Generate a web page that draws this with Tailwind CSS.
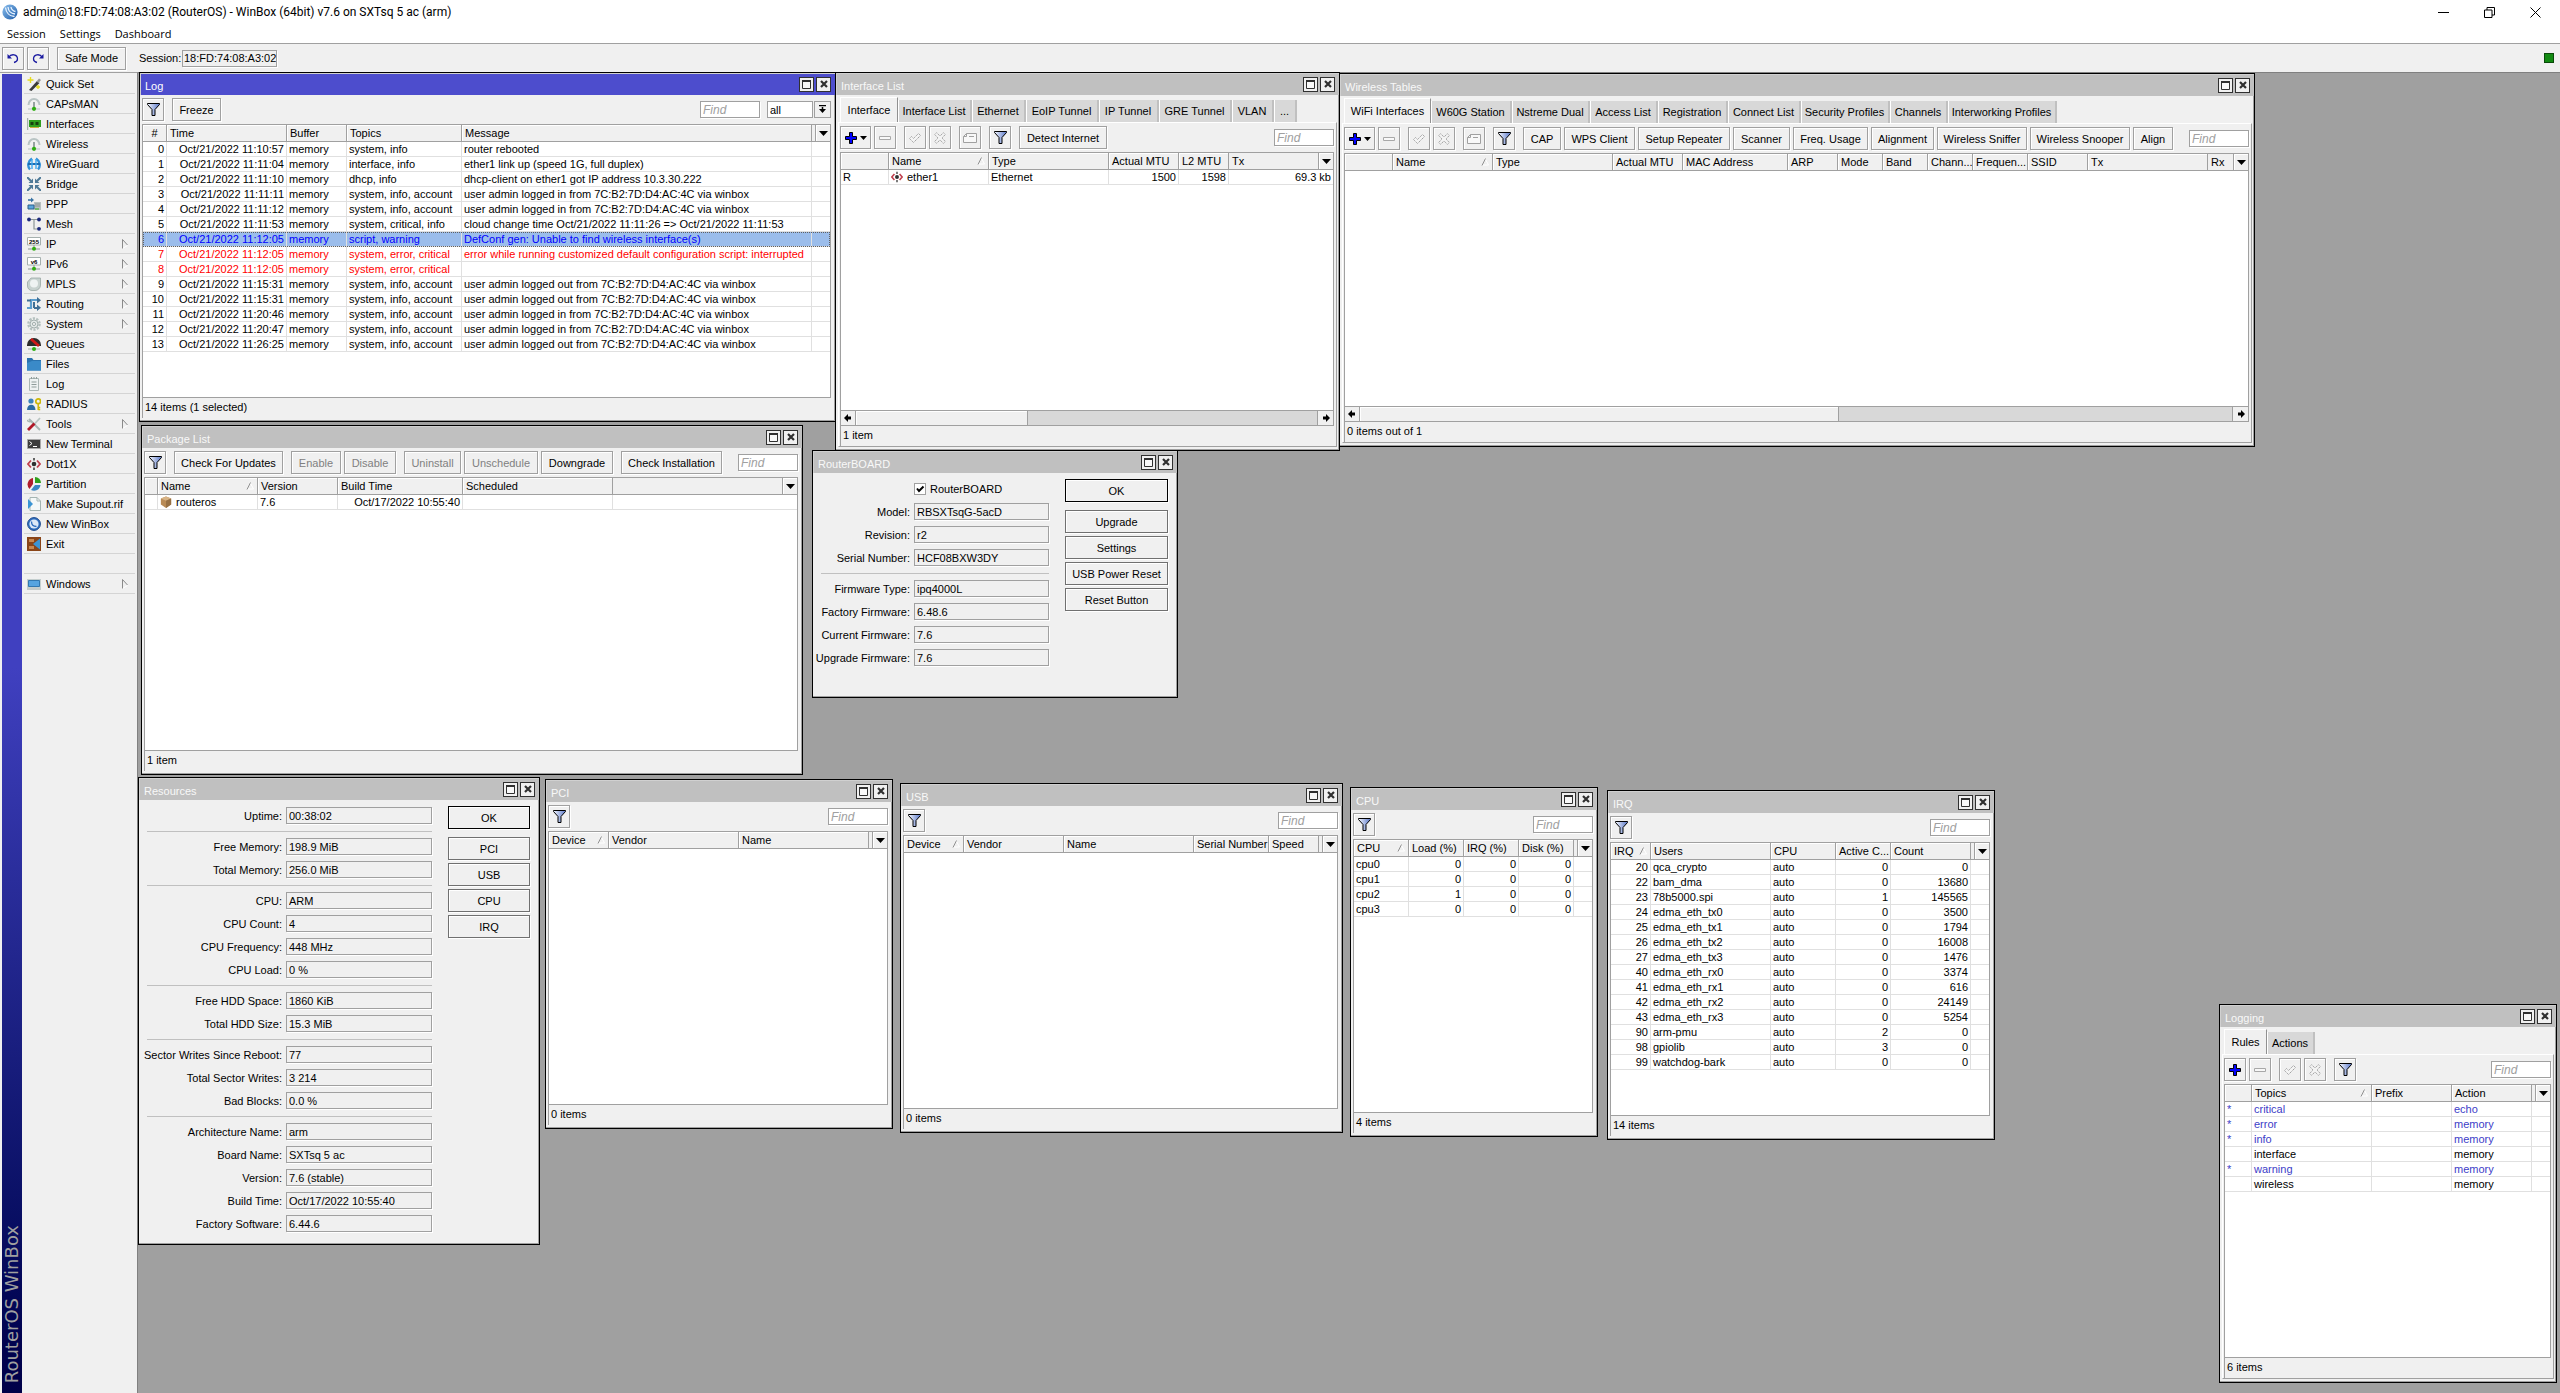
<!DOCTYPE html>
<html lang="en">
<head>
<meta charset="utf-8">
<title>admin@18:FD:74:08:A3:02 (RouterOS) - WinBox</title>
<script src="https://cdn.jsdelivr.net/npm/@tailwindcss/browser@4"></script>
</head>
<body class="flex h-screen flex-col overflow-hidden bg-[#f0f0f0] font-['Liberation_Sans',Arial,sans-serif] text-[11px] leading-[14px] text-black">

<svg class="absolute h-0 w-0" aria-hidden="true">
  <linearGradient id="ball" x1="0" y1="0" x2="1" y2="1"><stop offset="0" stop-color="#8cc0ee"/><stop offset="1" stop-color="#1d5ba8"/></linearGradient>
  <linearGradient id="fun" x1="0" y1="0" x2="1" y2="0"><stop offset="0" stop-color="#f4f7ff"/><stop offset="1" stop-color="#5a78c8"/></linearGradient>
  <symbol id="i-logo" viewBox="0 0 16 16"><circle cx="8" cy="8" r="7.6" fill="url(#ball)"/><path d="M3.5 3.5c.5 5 4 8.600 9 9M6 3c.3 3.500 3 6.500 7 7M9 3c.3 2 2 4 4.500 4.500" stroke="#e8f3ff" stroke-width="1.300" fill="none"/></symbol>
  <symbol id="i-winbox" viewBox="0 0 14 14"><circle cx="7" cy="7" r="6.400" fill="#2f6fc0" stroke="#1c4a8c"/><circle cx="7" cy="7" r="4.600" fill="#dce8f6"/><path d="M4.500 4.500c0 3 2 5 5 5" stroke="#2f6fc0" stroke-width="1.300" fill="none"/></symbol>
  <symbol id="i-quick" viewBox="0 0 14 14"><path d="M2 13L10 4l2.500 2L4.500 14z" fill="#3a3a3a"/><path d="M9.500 4.500l2.500-3 2 1.500-2.500 3z" fill="#999"/><path d="M3.500 0v6M.5 3h6M11 8v4M9 10h4" stroke="#e6dc1e" stroke-width="1.400"/></symbol>
  <symbol id="i-wifi" viewBox="0 0 14 14"><path d="M1.500 8A5.500 6 0 0 1 12.500 8" fill="none" stroke="#b9c4c4" stroke-width="2"/><path d="M7 5v6" stroke="#70807e" stroke-width="1.400"/><path d="M1 12h12" stroke="#b9c4c4"/><circle cx="7" cy="11.800" r="2.100" fill="#2fae12"/></symbol>
  <symbol id="i-card" viewBox="0 0 14 14"><path d="M.5 1v12" stroke="#a5b0ae" stroke-width="1.500"/><path d="M2 3h12v7H2z" fill="#2f9e1f"/><path d="M3.500 5h3v3h-3zM8.500 5h3v3h-3z" fill="#17400f"/><path d="M3 10.500h9" stroke="#c7b13c"/></symbol>
  <symbol id="i-wg" viewBox="0 0 14 14"><path d="M5 1.500C1 4 0 9 3 12.500M9 1.500c4 2.500 5 7.500 2 11" stroke="#2f8fd8" stroke-width="2.400" fill="none"/><path d="M1 7h12" stroke="#1c6bb0" stroke-width="2"/><path d="M5 2v10M9 2v10" stroke="#3fa9ee" stroke-width="1.400"/></symbol>
  <symbol id="i-bridge" viewBox="0 0 14 14"><path d="M0 0l4 4M14 0l-4 4M0 14l4-4M14 14l-4-4" stroke="#4d7896" stroke-width="2"/><path d="M6 1.500V6H1.500zM8 1.500V6h4.500zM6 12.500V8H1.500zM8 12.500V8h4.500z" fill="#4d7896"/></symbol>
  <symbol id="i-ppp" viewBox="0 0 14 14"><path d="M1 3h4" stroke="#3a74a4" stroke-width="1.600"/><path d="M4 .5L7 3 4 5.500z" fill="#3a74a4"/><path d="M7 5h7v8H7z" fill="#b8c0c0"/><path d="M8 7h5M8 9h5" stroke="#8b9494"/><path d="M8 12h4" stroke="#2fae12"/><path d="M1 8h6v4H1z" fill="#5aa6dc" stroke="#2d5f8a"/></symbol>
  <symbol id="i-mesh" viewBox="0 0 14 14"><path d="M2 2.500h10M7 2.500V12h5" stroke="#8c9796" stroke-width="1.200" fill="none"/><circle cx="2" cy="2.500" r="1.900" fill="#1c2a7c"/><circle cx="12" cy="2.500" r="1.900" fill="#1c2a7c"/><circle cx="12" cy="11.800" r="1.900" fill="#1c2a7c"/></symbol>
  <symbol id="i-ip" viewBox="0 0 14 14"><path d="M.5 .5h13v7.500H.5z" fill="#fff" stroke="#a5b0ae"/><path d="M7 8v3M1 12h12" stroke="#8c9796"/><circle cx="7" cy="11.800" r="2" fill="#2fae12"/></symbol>
  <symbol id="i-mpls" viewBox="0 0 14 14"><path d="M4 1h9.500v7A5.500 5.500 0 0 1 8 13.500H5A4.500 4.500 0 0 1 .5 9V5z" fill="#c7d2cf" stroke="#9aa8a5" stroke-width=".8"/><circle cx="7" cy="6.500" r="4" fill="#eef3f2"/></symbol>
  <symbol id="i-routing" viewBox="0 0 14 14"><path d="M0 11h4V3h6" stroke="#5b9dce" stroke-width="2.200" fill="none"/><path d="M0 3.500h4M7 11V6h1M7 11h3" stroke="#3f6f95" stroke-width="2" fill="none"/><path d="M10 0l4 3.200-4 3.200zM10 7.600l4 3.200-4 3.200z" fill="#3f6f95"/></symbol>
  <symbol id="i-gear" viewBox="0 0 14 14"><circle cx="7" cy="7" r="5.600" fill="none" stroke="#b4c0be" stroke-width="2.400" stroke-dasharray="2.200 1.300"/><circle cx="7" cy="7" r="4" fill="#e3e9e8" stroke="#a3b0ae"/><circle cx="7" cy="7" r="1.600" fill="#f0f0f0" stroke="#a3b0ae"/></symbol>
  <symbol id="i-queue" viewBox="0 0 14 14"><path d="M0 8a7 7 0 0 1 14 0v1H0z" fill="#2c2c2c"/><path d="M4 2l8 7" stroke="#d01818" stroke-width="2.800"/><path d="M1 12h12" stroke="#a5b0ae"/><circle cx="7" cy="11.900" r="2" fill="#2fae12"/></symbol>
  <symbol id="i-files" viewBox="0 0 14 14"><path d="M0 1h5l1.500 2H14v10.500H0z" fill="#2a72ae"/><path d="M0 6l5-2h9v9.500H0z" fill="#3a8ac8"/></symbol>
  <symbol id="i-log" viewBox="0 0 14 14"><path d="M2.500 1.500h9v12h-9z" fill="#eef2f2" stroke="#aab6b4"/><path d="M4.500 5h5M4.500 7.500h5M4.500 10h5M4.500 0v2M7 0v2M9.500 0v2" stroke="#8f9c9a"/></symbol>
  <symbol id="i-radius" viewBox="0 0 14 14"><circle cx="4" cy="4" r="2.600" fill="#3a84bc"/><path d="M0 13c0-7 8.500-7 8.500 0z" fill="#2a6ca4"/><circle cx="11.200" cy="4.300" r="2.400" fill="none" stroke="#ccb80a" stroke-width="1.700"/><path d="M11.200 6.500V13M11.200 10.500h2M11.200 12.500h2" stroke="#ccb80a" stroke-width="1.500"/></symbol>
  <symbol id="i-tools" viewBox="0 0 14 14"><path d="M2 2l11 11" stroke="#a9b6b4" stroke-width="2"/><path d="M0 3a3 3 0 0 0 4.500 1" stroke="#a9b6b4" stroke-width="1.600" fill="none"/><path d="M13 1L7.500 7" stroke="#b8c4c2" stroke-width="1.800"/><path d="M7.500 6.500L1 13" stroke="#b01828" stroke-width="2.800"/></symbol>
  <symbol id="i-term" viewBox="0 0 14 14"><path d="M.5 2.500h13v9H.5z" fill="#3c3c3c" stroke="#a8a8a8"/><path d="M2.500 4.500l2.500 2-2.500 2M6 9.500h4" stroke="#fff" fill="none"/></symbol>
  <symbol id="i-dot" viewBox="0 0 14 14"><path d="M4 3.500L1 7l3 3.500M10 3.500L13 7l-3 3.500" stroke="#c0404e" stroke-width="1.800" fill="none"/><circle cx="7" cy="7" r="2.300" fill="#303030"/><path d="M7 1v2.500M7 10.500V13" stroke="#404040" stroke-width="1.600"/></symbol>
  <symbol id="i-part" viewBox="0 0 14 14"><path d="M6 1v6l-3.500 5A6.500 6.500 0 0 1 6 1z" fill="#b01c2c"/><path d="M8 0a6 6 0 0 1 6 6H8z" fill="#2ea01c"/><path d="M13.500 8a6.500 6.500 0 0 1-9.500 5l4-5z" fill="#3a86c4"/></symbol>
  <symbol id="i-supout" viewBox="0 0 14 14"><path d="M3 .5h7l3.500 3.500v9.500H3z" fill="#f4f8f8" stroke="#a5b4b2"/><path d="M10 .5V4h3.500" fill="none" stroke="#a5b4b2"/><path d="M1 2l5 5-5 5z" fill="#3a94d4"/></symbol>
  <symbol id="i-exit" viewBox="0 0 14 14"><path d="M0 0h14v14H0z" fill="#8a4518"/><path d="M2 2h5v3H2zM2 9h5v3H2z" fill="#c88850"/><path d="M13 1.500v11L6 7z" fill="#3a94d4"/></symbol>
  <symbol id="i-win" viewBox="0 0 14 14"><path d="M0 2h14v9H0z" fill="#c4cece"/><path d="M1.500 3.500h11v6h-11z" fill="#56a4e0" stroke="#3278b0"/><path d="M0 12h14" stroke="#98a4a2"/></symbol>
  <symbol id="i-box" viewBox="0 0 14 14"><path d="M1 3l6-2.500L13 3v7l-6 4-6-4z" fill="#b98b56"/><path d="M1 3l6 2.500L13 3 7 .5z" fill="#d8b384"/><path d="M7 5.500V14l6-4V3z" fill="#977044"/></symbol>
  <symbol id="i-plus" viewBox="0 0 12 12"><path d="M4.500 .5h3v4h4v3h-4v4h-3v-4h-4v-3h4z" fill="#0000ff" stroke="#000"/></symbol>
  <symbol id="i-minus" viewBox="0 0 12 12"><path d="M.5 4.500h11v3H.5z" fill="#f8f8f8" stroke="#a8a8a8"/></symbol>
  <symbol id="i-check" viewBox="0 0 12 12"><path d="M.5 6.500L2.500 4.500l2 2L9.500 1.500l2 2-7 7z" fill="#f4f4f4" stroke="#a0a0a0" stroke-dasharray="1.500 .7"/></symbol>
  <symbol id="i-cross" viewBox="0 0 12 12"><path d="M.7 2.500L2.500 .7 6 4 9.500 .7l1.800 1.800L8 6l3.300 3.500-1.800 1.800L6 8l-3.500 3.300L.7 9.500 4 6z" fill="#f4f4f4" stroke="#a0a0a0" stroke-dasharray="1.500 .7"/></symbol>
  <symbol id="i-note" viewBox="0 0 14 12"><path d="M.5 4.500l3-3h10v9H.5z" fill="#f8f8f8" stroke="#a0a0a0"/><path d="M6 4.500h5M.5 4.500h3v-3" stroke="#a0a0a0" fill="none"/></symbol>
  <symbol id="i-filter" viewBox="0 0 13 13"><path d="M.5 .5h12v1L8 6.500v6H5v-6L.5 1.500z" fill="url(#fun)" stroke="#000"/></symbol>
  <symbol id="i-tri" viewBox="0 0 9 5"><path d="M0 0h9L4.500 5z" fill="#000"/></symbol>
  <symbol id="i-sort" viewBox="0 0 8 8"><path d="M4 .5L7.500 7H1" stroke="#fff" fill="none"/><path d="M4.500 .5L1 7.500" stroke="#909090" fill="none"/></symbol>
  <symbol id="i-sub" viewBox="0 0 6 10"><path d="M.5 10V.5L5.500 6" stroke="#8a8a8a" fill="none"/><path d="M5.500 6.500l-5 3" stroke="#fff" fill="none"/></symbol>
  <symbol id="i-undo" viewBox="0 0 12 12"><path d="M1.500 5.500c3-4.500 9-3 9 1.500 0 2-1.500 3-3.500 3.500" stroke="#1a1aa0" stroke-width="1.300" fill="none"/><path d="M.5 2v4.500H5z" fill="#1a1aa0"/></symbol>
  <symbol id="i-max" viewBox="0 0 9 9"><path d="M.5 .5h8v8h-8z" fill="#f8f8f8" stroke="#303030"/><path d="M0 1h9" stroke="#303030" stroke-width="2"/></symbol>
  <symbol id="i-x" viewBox="0 0 8 8"><path d="M1 1l6 6M7 1L1 7" stroke="#303030" stroke-width="2.200"/></symbol>
  <symbol id="i-arr" viewBox="0 0 8 8"><path d="M0 4l4-4v2.500h3v3H4V8z" fill="#000"/></symbol>
  <symbol id="i-tick" viewBox="0 0 12 12"><path d="M3 5.500l2 2.500 4.500-4.500" fill="none" stroke="#000" stroke-width="2"/></symbol>
</svg>

<header class="border-b border-[#a0a0a0] bg-white">
  <div class="flex h-[24px] items-center pl-[2px] font-['Roboto',sans-serif] text-[12px] leading-4">
    <svg class="h-4 w-4"><use href="#i-logo"/></svg>
    <h1 class="ml-[5px] flex-1">admin@18:FD:74:08:A3:02 (RouterOS) - WinBox (64bit) v7.6 on SXTsq 5 ac (arm)</h1>
    <button aria-label="Minimize" class="flex h-[22px] w-[46px] items-center justify-center"><svg class="h-[11px] w-[11px]" viewBox="0 0 11 11"><path d="M0 5.500h11" stroke="#000"/></svg></button>
    <button aria-label="Restore" class="flex h-[22px] w-[46px] items-center justify-center"><svg class="h-[11px] w-[11px]" viewBox="0 0 11 11"><path d="M.5 3h7.500v7.500H.5zM3 3V.5h7.500V8H8" fill="none" stroke="#000"/></svg></button>
    <button aria-label="Close" class="mr-[2px] flex h-[22px] w-[46px] items-center justify-center"><svg class="h-[11px] w-[11px]" viewBox="0 0 11 11"><path d="M.5 .5l10 10M10.500 .5l-10 10" stroke="#000"/></svg></button>
  </div>
  <nav class="flex h-[19px] items-center gap-[14px] pl-[7px] font-['Open_Sans','Noto_Sans',sans-serif] text-[11px] leading-4">
    <a href="#">Session</a><a href="#">Settings</a><a href="#">Dashboard</a>
  </nav>
</header>

<div class="flex h-[28px] items-center pr-[6px] pl-[2px]">
  <button aria-label="Undo" class="flex h-[23px] w-[22px] items-center justify-center border border-[#a0a0a0] shadow-[1px_1px_0_#fff,inset_1px_1px_0_#fff]"><svg class="h-3 w-3"><use href="#i-undo"/></svg></button>
  <button aria-label="Redo" class="ml-[3px] flex h-[23px] w-[22px] items-center justify-center border border-[#a0a0a0] shadow-[1px_1px_0_#fff,inset_1px_1px_0_#fff]"><svg class="h-3 w-3 -scale-x-100"><use href="#i-undo"/></svg></button>
  <button class="ml-2 h-[23px] w-[69px] border border-[#a0a0a0] shadow-[1px_1px_0_#fff,inset_1px_1px_0_#fff]">Safe Mode</button>
  <label for="session" class="ml-[13px] w-[43px]">Session:</label>
  <input id="session" readonly value="18:FD:74:08:A3:02" class="h-[17px] w-[95px] border border-[#a0a0a0] pl-px shadow-[1px_1px_0_#fff]">
  <span class="ml-auto h-[10px] w-[10px] border border-[#0a4a0a] bg-[#128a12]"></span>
</div>

<div class="flex min-h-0 flex-1">
  <aside class="flex w-[138px] shrink-0 border-t border-r border-t-[#a0a0a0] border-r-[#808080] pt-px pl-[2px]">
    <div class="flex w-5 items-end justify-center bg-linear-to-b from-[#4040c0] from-45% to-[#000048] pb-[10px]">
      <span class="rotate-180 font-['DejaVu_Sans',sans-serif] text-[18px] leading-5 whitespace-nowrap text-[#a0a0a0] [writing-mode:vertical-rl]">RouterOS WinBox</span>
    </div>
    <nav id="menu" class="ml-[2px] w-[111px]"></nav>
  </aside>
  <main id="desk" class="relative flex-1 overflow-hidden bg-[#a0a0a0] shadow-[inset_0_1px_0_#808080]"></main>
</div>

<script>
const icon = (id, cls = 'h-[14px] w-[14px]') => `<svg class="shrink-0 ${cls}" aria-hidden="true"><use href="#i-${id}"/></svg>`;

/* ---- side menu: [icon, label, has submenu] ---- */
const menu = [['quick','Quick Set'],['wifi','CAPsMAN'],['card','Interfaces'],['wifi','Wireless'],['wg','WireGuard'],['bridge','Bridge'],['ppp','PPP'],['mesh','Mesh'],['ip','IP',1,'255'],['ip','IPv6',1,'v6'],['mpls','MPLS',1],['routing','Routing',1],['gear','System',1],['queue','Queues'],['files','Files'],['log','Log'],['radius','RADIUS'],['tools','Tools',1],['term','New Terminal'],['dot','Dot1X'],['part','Partition'],['supout','Make Supout.rif'],['winbox','New WinBox'],['exit','Exit'],null,['win','Windows',1]];
document.getElementById('menu').innerHTML = menu.map(m => {
  if (!m) return '<div class="h-5 border-b border-[#d4d4d4]"></div>';
  const pic = m[3]
    ? `<svg class="h-[14px] w-[14px] shrink-0" viewBox="0 0 14 14" aria-hidden="true"><use href="#i-ip" width="14" height="14"/><text x="7" y="6.500" text-anchor="middle" font-size="6" font-weight="bold">${m[3]}</text></svg>`
    : icon(m[0]);
  return `<a href="#" class="flex h-5 items-center gap-[5px] border-b border-[#d4d4d4] pr-[7px] pl-[3px] whitespace-nowrap">${pic}<span class="flex-1">${m[1]}</span>${m[2] ? icon('sub','h-[10px] w-[6px]') : ''}</a>`;
}).join('');

/* ---- controls ---- */
const btn = (w, label, cls = 'border-[#a0a0a0]') => `<button class="h-[23px] shrink-0 border whitespace-nowrap shadow-[1px_1px_0_#fff,inset_1px_1px_0_#fff] ${cls}" style="width:${w}px">${label}</button>`;
const tb = (w, label, cls) => btn(w, label, 'border-[#a0a0a0] ' + cls);
const ib = (id, name, size = 'h-3 w-3', cls = '') => `<button aria-label="${name}" class="flex h-[23px] w-[22px] shrink-0 items-center justify-center border border-[#a0a0a0] shadow-[1px_1px_0_#fff,inset_1px_1px_0_#fff] ${cls}">${icon(id, size)}</button>`;
const find = (cls = 'ml-auto') => `<input type="search" aria-label="Find" placeholder="Find" class="h-[17px] w-[60px] border border-[#a0a0a0] bg-white pl-[2px] text-[12px] shadow-[1px_1px_0_#fff] placeholder:text-[#a0a0a0] placeholder:italic ${cls}">`;
const filter = (cls = '') => ib('filter', 'Filter', 'h-[13px] w-[13px]', cls);
const addMenu = `<button aria-label="Add" class="flex h-[23px] w-[31px] shrink-0 items-center justify-center gap-[3px] border border-[#a0a0a0] shadow-[1px_1px_0_#fff,inset_1px_1px_0_#fff]">${icon('plus','h-3 w-3')}${icon('tri','h-1 w-[7px]')}</button>`;
const edit = (add, note) => add + ib('minus','Remove','h-3 w-3','ml-[3px]') + ib('check','Enable','h-3 w-3','ml-2') + ib('cross','Disable','h-3 w-3','ml-[3px]') + (note ? ib('note','Comment','h-3 w-[14px]','ml-2') : '') + filter('ml-2');

/* cols: [width, title, align, sorted]; the last column takes what is left and holds the column menu */
function grid(t) {
  const head = t.cols.map((c, i) => {
    if (i === t.cols.length - 1) return `<th class="h-[17px] border-b border-[#a0a0a0] p-0 text-left font-normal"><div class="flex h-4 items-center justify-between"><span class="pl-[3px]">${c[1] || ''}</span><button aria-label="Columns" class="flex h-4 w-[15px] items-center justify-center border-l border-[#a0a0a0] shadow-[inset_1px_1px_0_#fff]">${icon('tri','h-[5px] w-[9px]')}</button></div></th>`;
    return `<th class="h-[17px] overflow-hidden border-r border-b border-[#a0a0a0] px-[3px] py-0 font-normal shadow-[inset_1px_1px_0_#fff] ${c[2] === 'c' ? 'text-center' : 'text-left'}"><div class="flex items-center ${c[2] === 'c' ? 'justify-center' : 'justify-between'}"><span class="whitespace-nowrap">${c[1]}</span>${c[3] ? icon('sort','h-2 w-2') : ''}</div></th>`;
  }).join('');
  const body = (t.rows || []).map(r => {
    const tone = { sel: 'bg-[#9bbdeb] text-[#0000ff] outline outline-dotted -outline-offset-1 outline-[#606060]', red: 'text-[#ff0000]', blue: 'text-[#4040c8]' }[r.tone] || '';
    return `<tr class="${tone}">` + t.cols.map((c, i) => `<td class="h-[15px] overflow-hidden border-b border-[#e0e0e0] px-[2px] py-0 whitespace-nowrap ${i < t.cols.length - 1 ? 'border-r' : ''} ${c[2] === 'r' || c[2] === 'c' ? 'text-right' : 'text-left'}">${r.c[i] ?? ''}</td>`).join('') + '</tr>';
  }).join('');
  const bar = t.thumb ? `<div class="flex h-[15px] border-r border-b border-[#a0a0a0] bg-[#d8d8d8]"><button aria-label="Scroll left" class="flex w-[15px] items-center justify-center border-r border-[#a0a0a0] bg-[#f0f0f0]">${icon('arr','h-2 w-2')}</button><div class="border-r border-[#a0a0a0] bg-[#f0f0f0] shadow-[inset_1px_1px_0_#fff]" style="width:${t.thumb}px"></div><button aria-label="Scroll right" class="ml-auto flex w-4 items-center justify-center border-l border-[#a0a0a0] bg-[#f0f0f0]">${icon('arr','h-2 w-2 rotate-180')}</button></div>` : '';
  return `<div class="flex min-h-0 flex-1 flex-col border-l border-[#a0a0a0]"><div class="min-h-0 flex-1 overflow-hidden border-t border-r border-b border-[#a0a0a0] bg-white"><table class="w-full table-fixed border-separate border-spacing-0"><colgroup>${t.cols.map(c => c[0] ? `<col style="width:${c[0]}px">` : '<col>').join('')}</colgroup><thead class="bg-[#f0f0f0]"><tr>${head}</tr></thead><tbody>${body}</tbody></table></div>${bar}<div class="flex h-5 items-center pb-[2px] pl-[2px]">${t.status}</div></div>`;
}
const tools = (html) => `<div class="flex h-[29px] shrink-0 items-center">${html}</div>`;
const plain = (bar, t) => `<div class="flex min-h-0 flex-1 flex-col pr-1 pb-[3px] pl-[2px]">${tools(bar)}${grid(t)}</div>`;
const tabbed = (tabs, bar, t) => `<div class="flex min-h-0 flex-1 flex-col px-[2px] pt-[2px] pb-[3px]"><div role="tablist" class="flex h-[25px] shrink-0 items-end pl-[2px]">${tabs.map(([w, n], i) => i
  ? `<button role="tab" class="h-[22px] shrink-0 border-r-2 border-[#c0c0c0] bg-[#d8d8d8] shadow-[inset_1px_0_0_#fff]" style="width:${w}px">${n}</button>`
  : `<button role="tab" aria-selected="true" class="h-[25px] shrink-0 border-t border-r border-l border-t-white border-r-[#909090] border-l-white" style="width:${w}px">${n}</button>`).join('')}</div><div class="flex min-h-0 flex-1 flex-col border border-t-white border-r-[#a0a0a0] border-b-[#a0a0a0] border-l-white pr-[2px] pl-px">${tools(bar)}${grid(t)}</div></div>`;

/* rows: [label, value] or null for a divider */
const form = (id, left, width, rows, fieldW, btnW, btns) => `<div class="flex pt-1 pl-2"><div class="shrink-0" style="width:${width}px">${left}${rows.map((r, i) => r
  ? `<div class="flex h-[23px] items-center justify-end gap-1"><label for="${id}${i}" class="whitespace-nowrap">${r[0]}:</label><input id="${id}${i}" readonly value="${r[1]}" class="h-[17px] shrink-0 border border-[#a0a0a0] pl-[2px] shadow-[1px_1px_0_#fff]" style="width:${fieldW}px"></div>`
  : '<hr class="mt-1 mb-[3px] border-t border-[#c0c0c0]">').join('')}</div><div class="ml-4 flex flex-col gap-[3px] pt-[2px]">${btns.map((b, i) => btn(btnW, b, i ? 'border-[#707070]' : 'mb-[5px] border-black')).join('')}</div></div>`;

const win = (title, place, body, active) => `<section aria-label="${title}" class="absolute flex flex-col border border-black bg-[#f0f0f0] shadow-[inset_-1px_-1px_0_#a0a0a0] ${place}"><div class="flex h-[22px] shrink-0 items-center gap-[2px] pr-1 pl-[5px] shadow-[inset_1px_1px_0_#d0d0d0] ${active ? 'bg-[#4d4dcd] text-white' : 'bg-[#c0c0c0] text-[#f8f8f8]'}"><h2 class="flex-1 pt-[3px]">${title}</h2>${['max','x'].map(k => `<button aria-label="${k === 'x' ? 'Close' : 'Maximize'}" class="flex h-[15px] w-[15px] items-center justify-center border border-[#303030] bg-[#f0f0f0]">${icon(k, k === 'x' ? 'h-2 w-2' : 'h-[9px] w-[9px]')}</button>`).join('')}</div>${body}</section>`;

/* ---- data ---- */
const A = 'system, info, account', MAC = '7C:B2:7D:D4:AC:4C';
const inn = `user admin logged in from ${MAC} via winbox`, out = `user admin logged out from ${MAC} via winbox`;
const log = [['11:10:57','system, info','router rebooted'],['11:11:04','interface, info','ether1 link up (speed 1G, full duplex)'],['11:11:10','dhcp, info','dhcp-client on ether1 got IP address 10.3.30.222'],['11:11:11',A,inn],['11:11:12',A,inn],['11:11:53','system, critical, info','cloud change time Oct/21/2022 11:11:26 =&gt; Oct/21/2022 11:11:53'],['11:12:05','script, warning','DefConf gen: Unable to find wireless interface(s)','sel'],['11:12:05','system, error, critical','error while running customized default configuration script: interrupted','red'],['11:12:05','system, error, critical','','red'],['11:15:31',A,out],['11:15:31',A,out],['11:20:46',A,inn],['11:20:47',A,inn],['11:26:25',A,out]]
  .map((r, i) => ({ c: [i, 'Oct/21/2022 ' + r[0], 'memory', r[1], r[2]], tone: r[3] }));
const irq = [[20,'qca_crypto',0,0],[22,'bam_dma',0,13680],[23,'78b5000.spi',1,145565],[24,'edma_eth_tx0',0,3500],[25,'edma_eth_tx1',0,1794],[26,'edma_eth_tx2',0,16008],[27,'edma_eth_tx3',0,1476],[40,'edma_eth_rx0',0,3374],[41,'edma_eth_rx1',0,616],[42,'edma_eth_rx2',0,24149],[43,'edma_eth_rx3',0,5254],[90,'arm-pmu',2,0],[98,'gpiolib',3,0],[99,'watchdog-bark',0,0]]
  .map(r => ({ c: [r[0], r[1], 'auto', r[2], r[3]] }));
const named = (id, n) => `<span class="flex items-center gap-1">${icon(id,'h-3 w-3')}${n}</span>`;

document.getElementById('desk').innerHTML = [
  win('Log', 'left-px top-0 h-[350px] w-[697px]', plain(
    filter() + tb(49,'Freeze','ml-2') + find() + `<select aria-label="Buffer" class="ml-[7px] h-[17px] w-[46px] appearance-none border border-[#a0a0a0] bg-white pl-[2px]"><option>all</option></select><button aria-label="Choose buffer" class="ml-px flex h-[17px] w-[17px] items-center justify-center border border-[#a0a0a0]"><svg class="h-[9px] w-[7px]" viewBox="0 0 7 9"><path d="M0 .5h7M3.500 2v3" stroke="#000" stroke-width="1.500"/><path d="M0 4h7L3.500 8z"/></svg></button>`,
    { cols: [[24,'#','c'],[120,'Time','r'],[60,'Buffer'],[115,'Topics'],[350,'Message'],[0]], rows: log, status: '14 items (1 selected)' }), true),
  win('Interface List', 'left-[697px] top-0 h-[379px] w-[505px]', tabbed(
    [[58,'Interface'],[74,'Interface List'],[54,'Ethernet'],[73,'EoIP Tunnel'],[60,'IP Tunnel'],[73,'GRE Tunnel'],[42,'VLAN'],[23,'...']],
    edit(addMenu, true) + tb(88,'Detect Internet','ml-2') + find(),
    { cols: [[48,''],[100,'Name','',1],[120,'Type'],[70,'Actual MTU','r'],[50,'L2 MTU','r'],[0,'Tx','r']], rows: [{ c: ['R', named('dot','ether1'), 'Ethernet', '1500', '1598', '69.3 kb'] }], thumb: 172, status: '1 item' })),
  win('Wireless Tables', 'left-[1201px] top-px h-[374px] w-[916px]', tabbed(
    [[87,'WiFi Interfaces'],[81,'W60G Station'],[78,'Nstreme Dual'],[68,'Access List'],[70,'Registration'],[73,'Connect List'],[89,'Security Profiles'],[58,'Channels'],[109,'Interworking Profiles']],
    edit(addMenu, true) + tb(38,'CAP','ml-2') + [[71,'WPS Client'],[92,'Setup Repeater'],[57,'Scanner'],[75,'Freq. Usage'],[63,'Alignment'],[90,'Wireless Sniffer'],[100,'Wireless Snooper'],[40,'Align']].map(b => tb(b[0], b[1], 'ml-[3px]')).join('') + find(),
    { cols: [[48,''],[100,'Name','',1],[120,'Type'],[70,'Actual MTU'],[105,'MAC Address'],[50,'ARP'],[45,'Mode'],[45,'Band'],[45,'Chann...'],[55,'Frequen...'],[60,'SSID'],[120,'Tx'],[0,'Rx']], thumb: 479, status: '0 items out of 1' })),
  win('Package List', 'left-[3px] top-[353px] h-[350px] w-[662px]', plain(
    filter() + tb(109,'Check For Updates','ml-2') + tb(50,'Enable','ml-2 text-[#808080]') + tb(52,'Disable','ml-[3px] text-[#808080]') + tb(57,'Uninstall','ml-2 text-[#808080]') + tb(74,'Unschedule','ml-[3px] text-[#808080]') + tb(72,'Downgrade','ml-[3px]') + tb(101,'Check Installation','ml-2') + find(),
    { cols: [[13,''],[100,'Name','',1],[80,'Version'],[125,'Build Time','r'],[150,'Scheduled'],[0]], rows: [{ c: ['', named('box','routeros'), '7.6', 'Oct/17/2022 10:55:40'] }], status: '1 item' })),
  win('RouterBOARD', 'left-[674px] top-[378px] h-[248px] w-[366px]', form('rb',
    `<div class="flex h-[23px] items-center gap-1 pl-[93px]"><span class="grid"><input id="rbon" type="checkbox" checked class="peer col-start-1 row-start-1 h-3 w-3 appearance-none border border-[#a0a0a0] bg-white"><span class="pointer-events-none invisible col-start-1 row-start-1 peer-checked:visible">${icon('tick','h-3 w-3')}</span></span><label for="rbon">RouterBOARD</label></div>`,
    228, [['Model','RBSXTsqG-5acD'],['Revision','r2'],['Serial Number','HCF08BXW3DY'],null,['Firmware Type','ipq4000L'],['Factory Firmware','6.48.6'],['Current Firmware','7.6'],['Upgrade Firmware','7.6']], 135, 103, ['OK','Upgrade','Settings','USB Power Reset','Reset Button'])),
  win('Resources', 'left-0 top-[705px] h-[468px] w-[402px]', form('rs', '',
    285, [['Uptime','00:38:02'],null,['Free Memory','198.9 MiB'],['Total Memory','256.0 MiB'],null,['CPU','ARM'],['CPU Count','4'],['CPU Frequency','448 MHz'],['CPU Load','0 %'],null,['Free HDD Space','1860 KiB'],['Total HDD Size','15.3 MiB'],null,['Sector Writes Since Reboot','77'],['Total Sector Writes','3 214'],['Bad Blocks','0.0 %'],null,['Architecture Name','arm'],['Board Name','SXTsq 5 ac'],['Version','7.6 (stable)'],['Build Time','Oct/17/2022 10:55:40'],['Factory Software','6.44.6']], 146, 82, ['OK','PCI','USB','CPU','IRQ'])),
  win('PCI', 'left-[407px] top-[707px] h-[350px] w-[348px]', plain(filter() + find(),
    { cols: [[60,'Device','',1],[130,'Vendor'],[130,'Name'],[0]], status: '0 items' })),
  win('USB', 'left-[762px] top-[711px] h-[350px] w-[443px]', plain(filter() + find(),
    { cols: [[60,'Device','',1],[100,'Vendor'],[130,'Name'],[75,'Serial Number'],[50,'Speed'],[0]], status: '0 items' })),
  win('CPU', 'left-[1212px] top-[715px] h-[350px] w-[248px]', plain(filter() + find(),
    { cols: [[55,'CPU','',1],[55,'Load (%)','r'],[55,'IRQ (%)','r'],[55,'Disk (%)','r'],[0]], rows: [0,0,1,0].map((l, i) => ({ c: ['cpu' + i, l, 0, 0] })), status: '4 items' })),
  win('IRQ', 'left-[1469px] top-[718px] h-[350px] w-[388px]', plain(filter() + find(),
    { cols: [[40,'IRQ','r',1],[120,'Users'],[65,'CPU'],[55,'Active C...','r'],[80,'Count','r'],[0]], rows: irq, status: '14 items' })),
  win('Logging', 'right-[3px] bottom-[10px] h-[379px] w-[338px]', tabbed([[43,'Rules'],[48,'Actions']], edit(ib('plus','Add')) + find(),
    { cols: [[27,''],[120,'Topics','',1],[80,'Prefix'],[80,'Action'],[0]], rows: [['*','critical','echo'],['*','error','memory'],['*','info','memory'],['','interface','memory'],['*','warning','memory'],['','wireless','memory']].map(r => ({ c: [r[0], r[1], '', r[2]], tone: r[0] ? 'blue' : '' })), status: '6 items' })),
].join('');
</script>
</body>
</html>
